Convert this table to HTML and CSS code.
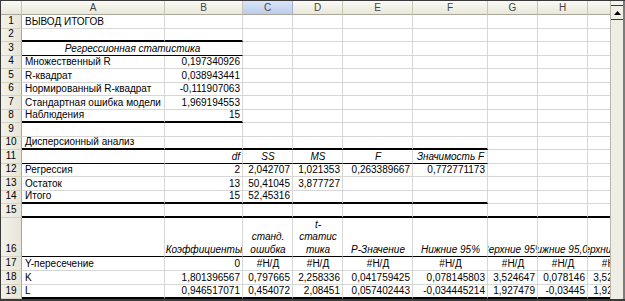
FILE: index.html
```html
<!DOCTYPE html>
<html lang="ru">
<head>
<meta charset="utf-8">
<title>Вывод итогов</title>
<link rel="stylesheet" href="styles.css">
</head>
<body>
<div class="window">
  <div class="viewport">
    <div class="sheet">
      <div class="row">
        <div class="corner"></div><div class="ch">A</div><div class="ch">B</div><div class="ch sel">C</div><div class="ch">D</div><div class="ch">E</div><div class="ch">F</div><div class="ch">G</div><div class="ch">H</div><div class="ch">I</div>
      </div>
      <div class="row">
        <div class="rh">1</div><div class="c">ВЫВОД ИТОГОВ</div><div class="c"></div><div class="c"></div><div class="c"></div><div class="c"></div><div class="c"></div><div class="c"></div><div class="c"></div><div class="c"></div>
      </div>
      <div class="row">
        <div class="rh">2</div><div class="c tb"></div><div class="c tb"></div><div class="c"></div><div class="c"></div><div class="c"></div><div class="c"></div><div class="c"></div><div class="c"></div><div class="c"></div>
      </div>
      <div class="row">
        <div class="rh">3</div><div class="c span2 i m bb">Регрессионная статистика</div><div class="c"></div><div class="c"></div><div class="c"></div><div class="c"></div><div class="c"></div><div class="c"></div><div class="c"></div>
      </div>
      <div class="row">
        <div class="rh">4</div><div class="c">Множественный R</div><div class="c r">0,197340926</div><div class="c"></div><div class="c"></div><div class="c"></div><div class="c"></div><div class="c"></div><div class="c"></div><div class="c"></div>
      </div>
      <div class="row">
        <div class="rh">5</div><div class="c">R-квадрат</div><div class="c r">0,038943441</div><div class="c"></div><div class="c"></div><div class="c"></div><div class="c"></div><div class="c"></div><div class="c"></div><div class="c"></div>
      </div>
      <div class="row">
        <div class="rh">6</div><div class="c">Нормированный R-квадрат</div><div class="c r">-0,111907063</div><div class="c"></div><div class="c"></div><div class="c"></div><div class="c"></div><div class="c"></div><div class="c"></div><div class="c"></div>
      </div>
      <div class="row">
        <div class="rh">7</div><div class="c">Стандартная ошибка модели</div><div class="c r">1,969194553</div><div class="c"></div><div class="c"></div><div class="c"></div><div class="c"></div><div class="c"></div><div class="c"></div><div class="c"></div>
      </div>
      <div class="row">
        <div class="rh">8</div><div class="c tb">Наблюдения</div><div class="c r tb">15</div><div class="c"></div><div class="c"></div><div class="c"></div><div class="c"></div><div class="c"></div><div class="c"></div><div class="c"></div>
      </div>
      <div class="row">
        <div class="rh">9</div><div class="c"></div><div class="c"></div><div class="c"></div><div class="c"></div><div class="c"></div><div class="c"></div><div class="c"></div><div class="c"></div><div class="c"></div>
      </div>
      <div class="row">
        <div class="rh">10</div><div class="c tb">Дисперсионный анализ</div><div class="c tb"></div><div class="c tb"></div><div class="c tb"></div><div class="c tb"></div><div class="c tb"></div><div class="c"></div><div class="c"></div><div class="c"></div>
      </div>
      <div class="row">
        <div class="rh">11</div><div class="c bb"></div><div class="c bb i r">df</div><div class="c bb i m">SS</div><div class="c bb i m">MS</div><div class="c bb i m">F</div><div class="c bb i m">Значимость F</div><div class="c"></div><div class="c"></div><div class="c"></div>
      </div>
      <div class="row">
        <div class="rh">12</div><div class="c">Регрессия</div><div class="c r">2</div><div class="c r">2,042707</div><div class="c r">1,021353</div><div class="c r">0,263389667</div><div class="c r">0,772771173</div><div class="c"></div><div class="c"></div><div class="c"></div>
      </div>
      <div class="row">
        <div class="rh">13</div><div class="c">Остаток</div><div class="c r">13</div><div class="c r">50,41045</div><div class="c r">3,877727</div><div class="c"></div><div class="c"></div><div class="c"></div><div class="c"></div><div class="c"></div>
      </div>
      <div class="row">
        <div class="rh">14</div><div class="c tb">Итого</div><div class="c r tb">15</div><div class="c r tb">52,45316</div><div class="c tb"></div><div class="c tb"></div><div class="c tb"></div><div class="c"></div><div class="c"></div><div class="c"></div>
      </div>
      <div class="row">
        <div class="rh">15</div><div class="c tb"></div><div class="c tb"></div><div class="c tb"></div><div class="c tb"></div><div class="c tb"></div><div class="c tb"></div><div class="c tb"></div><div class="c tb"></div><div class="c tb"></div>
      </div>
      <div class="row">
        <div class="rh">16</div><div class="c bb"></div><div class="c bb i m">Коэффициенты</div><div class="c bb i m"><span class="w">станд.<br>ошибка</span></div><div class="c bb i m"><span class="w">t-<br>статис<br>тика</span></div><div class="c bb i m">P-Значение</div><div class="c bb i m">Нижние 95%</div><div class="c bb i m">Верхние 95%</div><div class="c bb i m">Нижние 95,0%</div><div class="c bb i m">Верхние 95,0%</div>
      </div>
      <div class="row">
        <div class="rh">17</div><div class="c">Y-пересечение</div><div class="c r">0</div><div class="c m">#Н/Д</div><div class="c m">#Н/Д</div><div class="c m">#Н/Д</div><div class="c m">#Н/Д</div><div class="c m">#Н/Д</div><div class="c m">#Н/Д</div><div class="c m">#Н/Д</div>
      </div>
      <div class="row">
        <div class="rh">18</div><div class="c">K</div><div class="c r">1,801396567</div><div class="c r">0,797665</div><div class="c r">2,258336</div><div class="c r">0,041759425</div><div class="c r">0,078145803</div><div class="c r">3,524647</div><div class="c r">0,078146</div><div class="c r">3,524647</div>
      </div>
      <div class="row">
        <div class="rh">19</div><div class="c tb">L</div><div class="c r tb">0,946517071</div><div class="c r tb">0,454072</div><div class="c r tb">2,08451</div><div class="c r tb">0,057402443</div><div class="c r tb">-0,034445214</div><div class="c r tb">1,927479</div><div class="c r tb">-0,03445</div><div class="c r tb">1,927479</div>
      </div>
    </div>
  </div>
  <div class="vscroll">
    <div class="sb-gap"></div>
    <div class="sb-up">
      <svg width="7" height="4" viewBox="0 0 7 4"><polygon points="0,4 7,4 3.5,0" fill="#000"/></svg>
    </div>
    <div class="sb-track"></div>
  </div>
</div>
</body>
</html>
```

FILE: styles.css
```css
html, body {
  margin: 0;
  padding: 0;
}

body {
  width: 625px;
  height: 301px;
  overflow: hidden;
  background: #fff;
  font-family: "Liberation Sans", Arial, sans-serif;
  font-size: 10px;
  color: #000;
}

.window {
  display: flex;
  height: 301px;
  box-sizing: border-box;
  border-top: 1px solid #3a3a3a;
  border-left: 1px solid #3a3a3a;
  border-bottom: 2px solid #3a3a3a;
}

.viewport {
  width: 609px;
  overflow: hidden;
  flex: none;
}

.sheet {
  display: grid;
  grid-template-columns: 21px 143px 78px 50px 50px 70px 75px 50px 50px 50px;
  grid-template-rows: 14px repeat(7, 14px 13px) 14px 39px repeat(3, 14px);
  width: max-content;
}

.row {
  display: contents;
}

.corner,
.ch {
  box-sizing: border-box;
  background: linear-gradient(#fbfaf5, #e9e7da);
  border-right: 1px solid #c8c5b4;
  border-bottom: 1px solid #aca899;
}

.ch {
  display: flex;
  justify-content: center;
  align-items: center;
  color: #444;
  line-height: 12px;
}

.ch.sel {
  background: linear-gradient(#d9e4f7, #bccdec);
  border-right-color: #9db3d8;
}

.rh {
  box-sizing: border-box;
  display: flex;
  justify-content: center;
  align-items: flex-end;
  padding-bottom: 1px;
  background: linear-gradient(90deg, #f3f2ea, #e7e5d8);
  border-right: 1px solid #aca899;
  border-bottom: 1px solid #d4d1c0;
  line-height: 12px;
}

.c {
  box-sizing: border-box;
  display: flex;
  align-items: flex-end;
  min-width: 0;
  overflow: hidden;
  white-space: nowrap;
  padding: 0 2px 0 3px;
  border-right: 1px solid #d6d6d6;
  border-bottom: 1px solid #d6d6d6;
  line-height: 12px;
}

.span2 {
  grid-column: span 2;
}

.r {
  justify-content: flex-end;
}

.m {
  justify-content: center;
}

.i {
  font-style: italic;
}

.bb {
  border-bottom-color: #000;
}

.tb {
  border-bottom: 2px solid #000;
}

.w {
  white-space: normal;
  text-align: center;
  line-height: 12.5px;
}

.vscroll {
  flex: none;
  width: 15px;
  box-sizing: border-box;
  display: flex;
  flex-direction: column;
  background: #eeede5;
  border-left: 1px solid #b9b7aa;
  border-right: 2px solid #7c7c7c;
}

.sb-gap {
  height: 4px;
  background: #f4f3ec;
}

.sb-up {
  height: 15px;
  box-sizing: border-box;
  display: flex;
  justify-content: center;
  align-items: center;
  border-top: 1px solid #3a3a3a;
  border-bottom: 1px solid #3a3a3a;
  background: #f1efe6;
}

.sb-track {
  flex: 1;
  background: #efeee4;
}
```
